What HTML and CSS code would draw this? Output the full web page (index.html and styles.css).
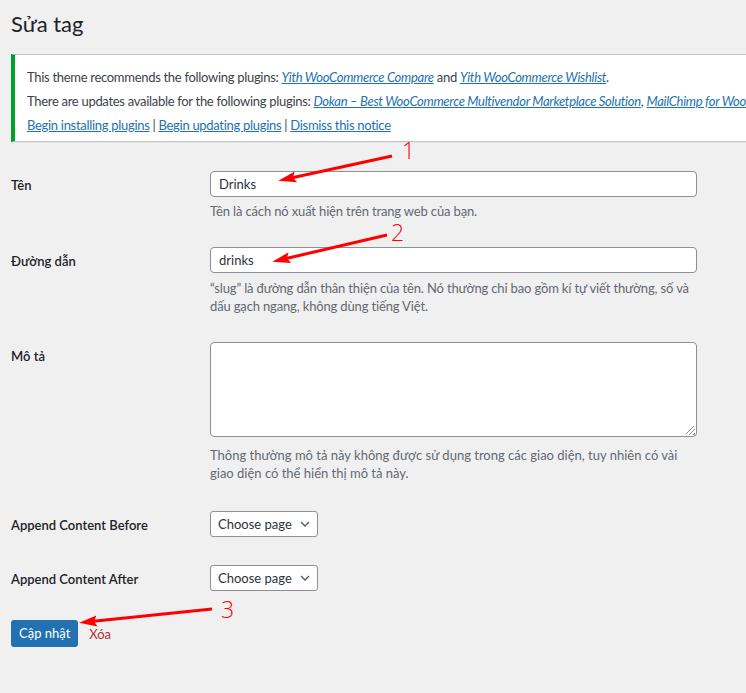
FILE: index.html
```html
<!DOCTYPE html>
<html lang="vi">
<head>
<meta charset="utf-8">
<title>Sửa tag</title>
<link rel="stylesheet" href="styles.css">
</head>
<body>
<div class="wrap">
  <h1 class="title">Sửa tag</h1>
  <div class="notice">
    <p>This theme recommends the following plugins: <a class="it" href="#">Yith WooCommerce Compare</a> and <a class="it" href="#">Yith WooCommerce Wishlist</a>.</p>
    <p>There are updates available for the following plugins: <a class="it" href="#">Dokan – Best WooCommerce Multivendor Marketplace Solution</a>, <a class="it" href="#">MailChimp for WooCommerce</a>.</p>
    <p><a href="#">Begin installing plugins</a> | <a href="#">Begin updating plugins</a> | <a href="#">Dismiss this notice</a></p>
  </div>

  <form class="form">
    <div class="row r1">
      <label class="th">Tên</label>
      <div class="td">
        <input class="text" type="text" value="Drinks">
        <p class="desc">Tên là cách nó xuất hiện trên trang web của bạn.</p>
      </div>
    </div>
    <div class="row r2">
      <label class="th">Đường dẫn</label>
      <div class="td">
        <input class="text" type="text" value="drinks">
        <p class="desc">“slug” là đường dẫn thân thiện của tên. Nó thường chỉ bao gồm kí tự viết thường, số và dấu gạch ngang, không dùng tiếng Việt.</p>
      </div>
    </div>
    <div class="row r3">
      <label class="th">Mô tả</label>
      <div class="td">
        <div class="textarea"><span class="grip"></span></div>
        <p class="desc d3">Thông thường mô tả này không được sử dụng trong các giao diện, tuy nhiên có vài giao diện có thể hiển thị mô tả này.</p>
      </div>
    </div>
    <div class="row r4">
      <label class="th">Append Content Before</label>
      <div class="td">
        <div class="select">Choose page<svg class="chev" width="10" height="6" viewBox="0 0 10 6"><path d="M1 1 L5 5 L9 1" fill="none" stroke="#50575e" stroke-width="1.3"/></svg></div>
      </div>
    </div>
    <div class="row r5">
      <label class="th">Append Content After</label>
      <div class="td">
        <div class="select">Choose page<svg class="chev" width="10" height="6" viewBox="0 0 10 6"><path d="M1 1 L5 5 L9 1" fill="none" stroke="#50575e" stroke-width="1.3"/></svg></div>
      </div>
    </div>
    <div class="actions">
      <span class="button">Cập nhật</span>
      <a class="delete" href="#">Xóa</a>
    </div>
  </form>
</div>

<svg class="overlay" width="746" height="693" viewBox="0 0 746 693">
  <defs>
    <marker id="ah" markerUnits="userSpaceOnUse" markerWidth="18" markerHeight="12" refX="6" refY="6" orient="auto">
      <path d="M0,0.5 L18,6 L0,11.5 L3,6 z" fill="#ff0000"/>
    </marker>
  </defs>
  <line x1="392" y1="156" x2="290" y2="178.2" stroke="#ff0000" stroke-width="3" marker-end="url(#ah)"/>
  <line x1="387" y1="235" x2="284" y2="259" stroke="#ff0000" stroke-width="3" marker-end="url(#ah)"/>
  <line x1="212" y1="609" x2="91" y2="621.6" stroke="#ff0000" stroke-width="3" marker-end="url(#ah)"/>
</svg>
<span class="num n1">1</span>
<span class="num n2">2</span>
<span class="num n3">3</span>
</body>
</html>
```
FILE: styles.css
```css
html, body {
  margin: 0;
  padding: 0;
  overflow: hidden;
}
body {
  background: #f0f0f1;
  color: #3c434a;
  font-family: Lato, "Noto Sans", sans-serif;
  font-size: 13px;
  width: 746px;
  height: 693px;
  position: relative;
}
.wrap {
  padding-left: 11px;
}
.title {
  margin: 9px 0 0;
  font-size: 22px;
  font-weight: 400;
  line-height: 29px;
  color: #1d2327;
}
.notice {
  margin-top: 16px;
  width: 900px;
  background: #fff;
  border: 1px solid #c3c4c7;
  border-left: 4px solid #00a32a;
  box-shadow: 0 1px 1px rgba(0,0,0,0.04);
  padding: 10px 12px 4px;
  white-space: nowrap;
  letter-spacing: -0.3px;
}
.notice p {
  margin: 0;
  line-height: 24px;
  color: #3c434a;
}
a {
  color: #2271b1;
  text-decoration: underline;
}
a.it {
  font-style: italic;
}
.form {
  margin-top: 29px;
}
.row {
  display: flex;
  align-items: flex-start;
}
.th {
  width: 199px;
  flex: none;
  font-weight: 600;
  color: #1d2327;
  line-height: 26px;
  padding-top: 1px;
}
.td {
  width: 487px;
}
.r2 { margin-top: 27px; }
.r3 { margin-top: 27px; }
.r4 { margin-top: 29px; }
.r5 { margin-top: 27px; }
.text {
  display: block;
  box-sizing: border-box;
  width: 487px;
  height: 26px;
  margin: 0;
  border: 1px solid #8c8f94;
  border-radius: 4px;
  padding: 0 8px;
  font-family: inherit;
  font-size: 13px;
  color: #2c3338;
  background: #fff;
  outline: none;
}
.desc {
  margin: 5px 0 0;
  line-height: 18px;
  color: #646970;
  letter-spacing: -0.15px;
}
.r2 .desc { margin-top: 6px; }
.desc.d3 {
  margin-top: 9px;
  letter-spacing: 0;
  padding-right: 12px;
}
.textarea {
  box-sizing: border-box;
  width: 487px;
  height: 95px;
  border: 1px solid #8c8f94;
  border-radius: 4px;
  background: #fff;
  position: relative;
}
.grip {
  position: absolute;
  right: 1px;
  bottom: 1px;
  width: 9px;
  height: 9px;
  background: linear-gradient(135deg, transparent 40%, #8c8f94 40%, #8c8f94 47%, transparent 47%, transparent 65%, #8c8f94 65%, #8c8f94 72%, transparent 72%, transparent 88%, #8c8f94 88%);
}
.select {
  box-sizing: border-box;
  width: 108px;
  height: 26px;
  border: 1px solid #8c8f94;
  border-radius: 3px;
  background: #fff;
  padding: 0 7px 0 7px;
  display: flex;
  align-items: center;
  justify-content: space-between;
  line-height: 24px;
  font-size: 13px;
  color: #2c3338;
}
.chev { flex: none; }
.actions {
  margin-top: 28px;
  display: flex;
  align-items: center;
  gap: 11px;
}
.button {
  display: inline-block;
  box-sizing: border-box;
  height: 27px;
  line-height: 27px;
  padding: 0 8px;
  background: #2271b1;
  color: #fff;
  border-radius: 3px;
}
.delete {
  color: #b32d2e;
  text-decoration: none;
}
.overlay {
  position: absolute;
  left: 0;
  top: 0;
  pointer-events: none;
}
.num {
  position: absolute;
  color: #ff0000;
  font-family: "Open Sans", sans-serif;
  font-weight: 300;
  font-size: 23px;
  line-height: 23px;
}
.n1 { left: 402px; top: 139px; }
.n2 { left: 391px; top: 221px; }
.n3 { left: 221px; top: 598px; }
```
